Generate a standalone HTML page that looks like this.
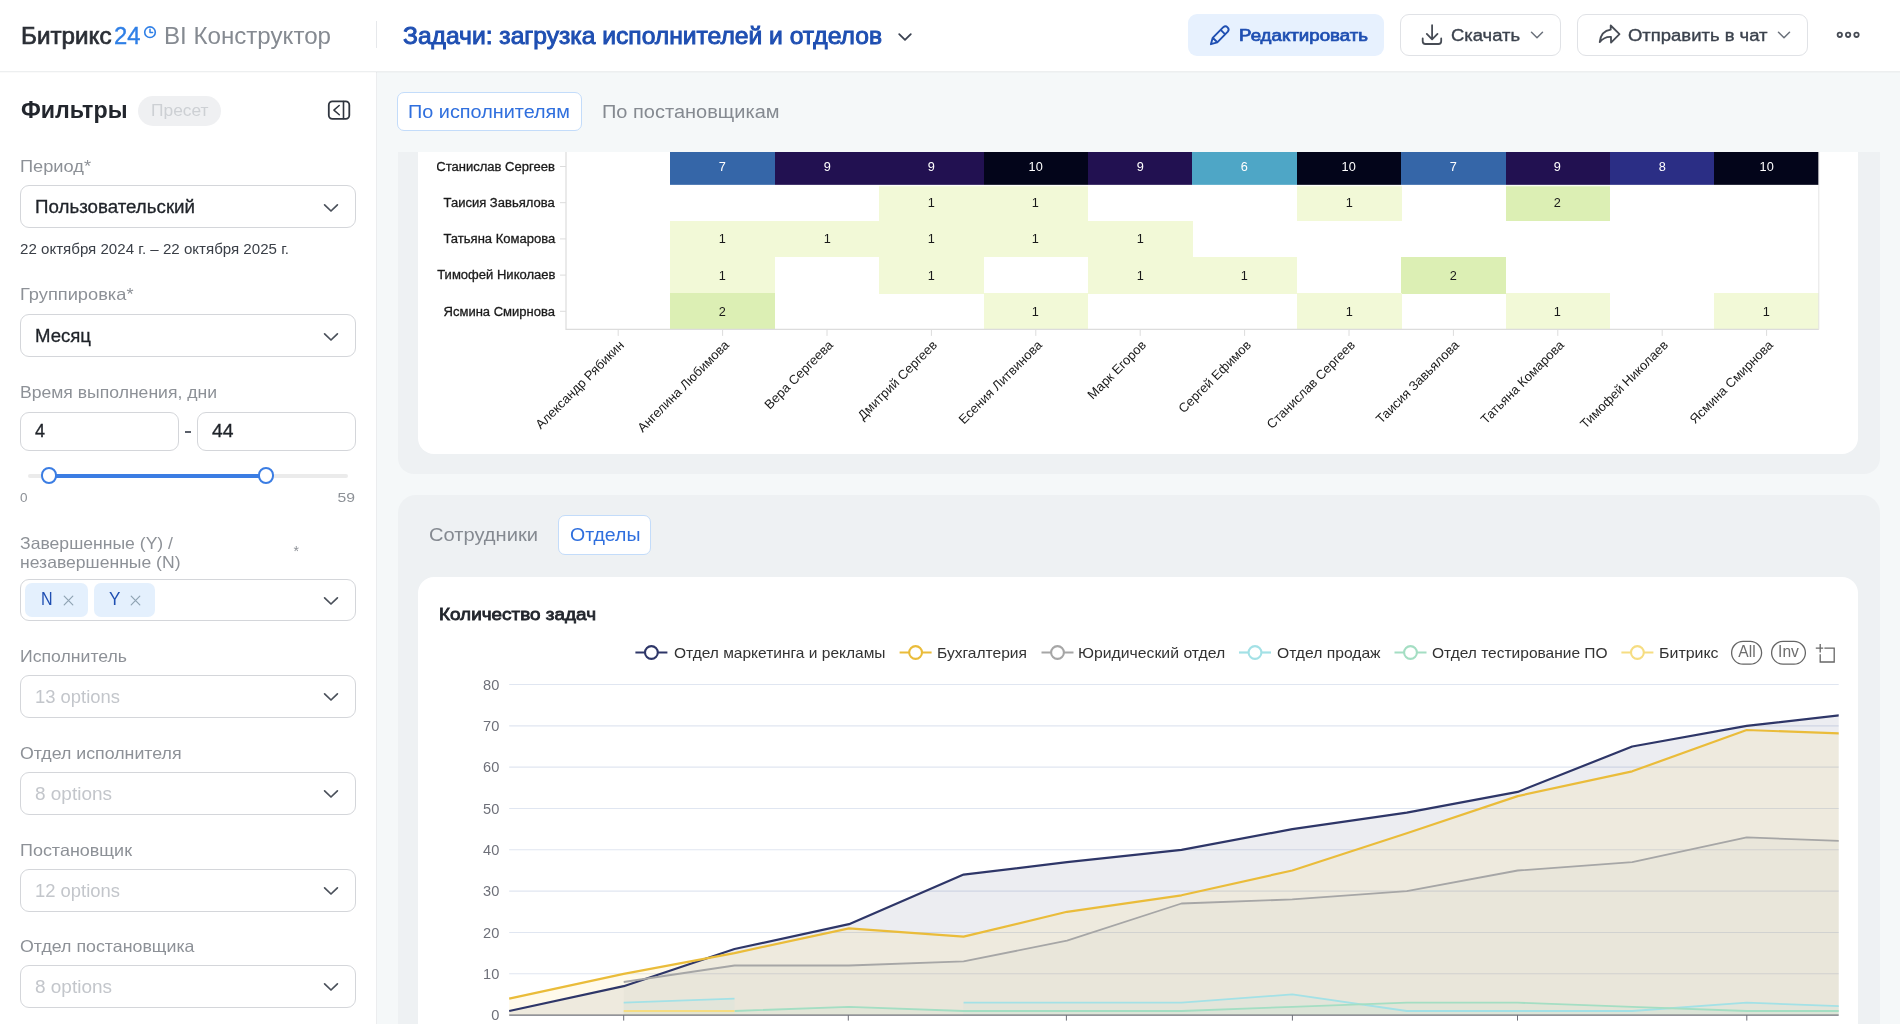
<!DOCTYPE html><html lang="ru"><head><meta charset="utf-8"><title>Битрикс24 BI Конструктор</title><style>
*{box-sizing:border-box}
html,body{margin:0;padding:0}
body{width:1900px;height:1024px;overflow:hidden;background:#f5f8f9;font-family:"Liberation Sans",Arial,sans-serif;position:relative}
.t{position:absolute;white-space:pre;line-height:1;display:block}
.b{position:absolute}
.sel{position:absolute;left:20px;width:336px;height:43px;border:1px solid #d4d6da;border-radius:9px;background:#fff}
svg{position:absolute;overflow:visible}
</style></head><body><div id="root" style="position:absolute;left:0;top:0;width:1900px;height:1024px;will-change:transform;overflow:hidden"><div class="b" style="left:398px;top:100px;width:1482px;height:374px;background:#eef1f3;border-radius:16px"></div><div class="b" style="left:418px;top:120px;width:1440px;height:334px;background:#fff;border-radius:16px"></div><div class="b" style="left:377px;top:72px;width:1523px;height:80px;background:#f5f8f9"></div><div class="b" style="left:398px;top:495px;width:1482px;height:600px;background:#eef1f3;border-radius:18px"></div><div class="b" style="left:418px;top:577px;width:1440px;height:500px;background:#fff;border-radius:16px"></div><div class="b" style="left:0;top:0;width:377px;height:1024px;background:#fff;border-right:1px solid #ecedef"></div><div class="b" style="left:0;top:0;width:1900px;height:72px;background:#fff;border-bottom:1px solid #edeff0;box-shadow:0 1px 1px rgba(0,0,0,.02)"></div><div class="b" style="left:375.5px;top:21px;width:1px;height:27px;background:#e6e8eb"></div><span class="t" style="left:20.50px;top:24.00px;font-size:24px;color:#2a2e35;transform:scaleX(1.0092);transform-origin:0 50%;-webkit-text-stroke:0.7px #2a2e35;">Битрикс</span><span class="t" style="left:114.00px;top:24.00px;font-size:24px;color:#2f7fe6;transform:scaleX(0.9924);transform-origin:0 50%;-webkit-text-stroke:0.4px #2f7fe6;">24</span><span class="t" style="left:163.50px;top:24.00px;font-size:24px;color:#858a91;transform:scaleX(1.0049);transform-origin:0 50%;">BI Конструктор</span><span class="t" style="left:402.50px;top:24.00px;font-size:24px;color:#1f4fb2;transform:scaleX(1.0262);transform-origin:0 50%;-webkit-text-stroke:0.95px #1f4fb2;">Задачи: загрузка исполнителей и отделов</span><svg style="left:897px;top:31px" width="16" height="12" viewBox="0 0 16 12"><path d="M2.2 3.2 8 8.8l5.8-5.6" fill="none" stroke="#3a4150" stroke-width="1.8" stroke-linecap="round" stroke-linejoin="round"/></svg><div class="b" style="left:1188px;top:14px;width:196px;height:42px;background:#e7f1fe;border-radius:9px"></div><span class="t" style="left:1238.50px;top:28.00px;font-size:16px;color:#1f4fb2;transform:scaleX(1.1671);transform-origin:0 50%;-webkit-text-stroke:0.7px #1f4fb2;">Редактировать</span><div class="b" style="left:1400px;top:14px;width:161px;height:42px;background:#fff;border:1px solid #e0e2e6;border-radius:9px"></div><span class="t" style="left:1451.00px;top:28.00px;font-size:16px;color:#3b424d;transform:scaleX(1.1500);transform-origin:0 50%;-webkit-text-stroke:0.35px #3b424d;">Скачать</span><svg style="left:1529px;top:29px" width="16" height="12" viewBox="0 0 16 12"><path d="M2.5 3.3 8 8.7l5.5-5.4" fill="none" stroke="#6a707a" stroke-width="1.5" stroke-linecap="round" stroke-linejoin="round"/></svg><div class="b" style="left:1577px;top:14px;width:231px;height:42px;background:#fff;border:1px solid #e0e2e6;border-radius:9px"></div><span class="t" style="left:1628.00px;top:28.00px;font-size:16px;color:#3b424d;transform:scaleX(1.1535);transform-origin:0 50%;-webkit-text-stroke:0.35px #3b424d;">Отправить в чат</span><svg style="left:1776px;top:29px" width="16" height="12" viewBox="0 0 16 12"><path d="M2.5 3.3 8 8.7l5.5-5.4" fill="none" stroke="#6a707a" stroke-width="1.5" stroke-linecap="round" stroke-linejoin="round"/></svg><span class="t" style="left:20.50px;top:99.00px;font-size:23px;color:#22262d;font-weight:700;transform:scaleX(1.0098);transform-origin:0 50%;">Фильтры</span><div class="b" style="left:137.5px;top:95.5px;width:83.5px;height:30px;background:#eff0f2;border-radius:15px"></div><span class="t" style="left:151.00px;top:103.00px;font-size:16px;color:#cdd0d4;transform:scaleX(1.0849);transform-origin:0 50%;">Пресет</span><svg style="left:0;top:0" width="1900" height="120" viewBox="0 0 1900 120" fill="none" stroke-linecap="round" stroke-linejoin="round"><circle cx="150" cy="32.2" r="5.3" stroke="#2f7fe6" stroke-width="1.6"/><path d="M150 29.2v3.2h2.6" stroke="#2f7fe6" stroke-width="1.5"/><path d="M1210.9 44.2L1212.7 37.8L1223.3 27.2a3.2 3.2 0 0 1 4.5 4.5L1217.3 42.3Z M1212.7 37.8L1217.3 42.3 M1220.7 29.8L1225.2 34.3" stroke="#1f4fb2" stroke-width="1.9"/><path d="M1432.1 25.2V39 M1426.8 33.9L1432.1 39.3L1437.5 33.9 M1422.7 38.5V41.3a2.7 2.7 0 0 0 2.7 2.7H1438.5a2.7 2.7 0 0 0 2.7-2.7V38.5" stroke="#474c55" stroke-width="1.8"/><path d="M1610.7 25.5L1619.5 34.1L1611 42.6V36.9C1606.4 36.6 1602.8 38.3 1599.7 42.1C1600.5 35.2 1604.3 30.5 1610.7 29.7Z" stroke="#474c55" stroke-width="1.8"/><g stroke="#474c55" stroke-width="1.8"><circle cx="1839.8" cy="34.8" r="2.2"/><circle cx="1848.1" cy="34.8" r="2.2"/><circle cx="1856.5" cy="34.8" r="2.2"/></g><rect x="328.8" y="101.3" width="20.5" height="17.5" rx="3.6" stroke="#2f353f" stroke-width="1.8"/><path d="M343.5 101.5V118.5" stroke="#2f353f" stroke-width="1.6"/><path d="M339.2 105.5L333.9 110.1L339.3 114.7" stroke="#2f353f" stroke-width="1.5"/></svg><span class="t" style="left:20.00px;top:158.00px;font-size:16.5px;color:#8d9197;transform:scaleX(1.1043);transform-origin:0 50%;">Период*</span><div class="sel" style="top:185px"></div><span class="t" style="left:35.00px;top:198.00px;font-size:18px;color:#1f2329;transform:scaleX(1.0403);transform-origin:0 50%;-webkit-text-stroke:0.3px #1f2329;">Пользовательский</span><svg style="left:322px;top:201.5px" width="18" height="12" viewBox="0 0 18 12"><path d="M2.6 2.8 9 9l6.4-6.2" fill="none" stroke="#4a505a" stroke-width="1.7" stroke-linecap="round" stroke-linejoin="round"/></svg><span class="t" style="left:20.00px;top:242.00px;font-size:14px;color:#3a3f47;transform:scaleX(1.0782);transform-origin:0 50%;">22 октября 2024 г. – 22 октября 2025 г.</span><span class="t" style="left:20.00px;top:286.00px;font-size:16.5px;color:#8d9197;transform:scaleX(1.1058);transform-origin:0 50%;">Группировка*</span><div class="sel" style="top:314px"></div><span class="t" style="left:35.00px;top:327.00px;font-size:18px;color:#1f2329;transform:scaleX(1.0320);transform-origin:0 50%;-webkit-text-stroke:0.3px #1f2329;">Месяц</span><svg style="left:322px;top:330.5px" width="18" height="12" viewBox="0 0 18 12"><path d="M2.6 2.8 9 9l6.4-6.2" fill="none" stroke="#4a505a" stroke-width="1.7" stroke-linecap="round" stroke-linejoin="round"/></svg><span class="t" style="left:20.00px;top:384.00px;font-size:16.5px;color:#8d9197;transform:scaleX(1.0654);transform-origin:0 50%;">Время выполнения, дни</span><div class="b" style="left:20px;top:412px;width:159px;height:39px;border:1px solid #d4d6da;border-radius:9px;background:#fff"></div><div class="b" style="left:197px;top:412px;width:159px;height:39px;border:1px solid #d4d6da;border-radius:9px;background:#fff"></div><span class="t" style="left:35.00px;top:422.00px;font-size:18px;color:#1f2329;-webkit-text-stroke:0.3px #1f2329;">4</span><span class="t" style="left:212.00px;top:422.00px;font-size:18px;color:#1f2329;transform:scaleX(1.0733);transform-origin:0 50%;-webkit-text-stroke:0.3px #1f2329;">44</span><div class="b" style="left:184.5px;top:430.5px;width:6px;height:2px;background:#5a606a"></div><div class="b" style="left:28px;top:473.7px;width:320px;height:4px;border-radius:2px;background:#ebebeb"></div><div class="b" style="left:49px;top:473.5px;width:217px;height:4.4px;background:#3b7de3"></div><div class="b" style="left:40.7px;top:467.4px;width:16.6px;height:16.6px;border-radius:50%;border:2.2px solid #3b7de3;background:#fff"></div><div class="b" style="left:257.7px;top:467.4px;width:16.6px;height:16.6px;border-radius:50%;border:2.2px solid #3b7de3;background:#fff"></div><span class="t" style="left:20.00px;top:491.00px;font-size:13.5px;color:#8d9197;">0</span><span class="t" style="left:339.97px;top:491.00px;font-size:13.5px;color:#8d9197;transform:scaleX(1.1642);transform-origin:100% 50%;">59</span><span class="t" style="left:20.00px;top:535.00px;font-size:16.5px;color:#8d9197;transform:scaleX(1.0662);transform-origin:0 50%;">Завершенные (Y) /</span><span class="t" style="left:20.00px;top:554.00px;font-size:16.5px;color:#8d9197;transform:scaleX(1.0646);transform-origin:0 50%;">незавершенные (N)</span><span class="t" style="left:293.50px;top:544.00px;font-size:14px;color:#8d9197;">*</span><div class="sel" style="top:579px;height:42px"></div><div class="b" style="left:24.5px;top:583px;width:63.5px;height:34px;border-radius:7px;background:#e4f0fd"></div><div class="b" style="left:93.5px;top:583px;width:61.5px;height:34px;border-radius:7px;background:#e4f0fd"></div><span class="t" style="left:40.80px;top:590.00px;font-size:18px;color:#1f4fb2;transform:scaleX(0.8923);transform-origin:0 50%;">N</span><span class="t" style="left:109.00px;top:590.00px;font-size:18px;color:#1f4fb2;transform:scaleX(0.9488);transform-origin:0 50%;">Y</span><svg style="left:62.5px;top:594.5px" width="11" height="11" viewBox="0 0 11 11"><path d="M1.2 1.2l8.6 8.6M9.8 1.2 1.2 9.8" stroke="#8fa3b3" stroke-width="1.2" stroke-linecap="round"/></svg><svg style="left:130px;top:594.5px" width="11" height="11" viewBox="0 0 11 11"><path d="M1.2 1.2l8.6 8.6M9.8 1.2 1.2 9.8" stroke="#8fa3b3" stroke-width="1.2" stroke-linecap="round"/></svg><svg style="left:322px;top:594.5px" width="18" height="12" viewBox="0 0 18 12"><path d="M2.6 2.8 9 9l6.4-6.2" fill="none" stroke="#4a505a" stroke-width="1.7" stroke-linecap="round" stroke-linejoin="round"/></svg><span class="t" style="left:20.00px;top:648.00px;font-size:16.5px;color:#8d9197;transform:scaleX(1.0695);transform-origin:0 50%;">Исполнитель</span><div class="sel" style="top:675px"></div><span class="t" style="left:35.00px;top:688.00px;font-size:18px;color:#c3c6cb;transform:scaleX(1.0231);transform-origin:0 50%;">13 options</span><svg style="left:322px;top:691px" width="18" height="12" viewBox="0 0 18 12"><path d="M2.6 2.8 9 9l6.4-6.2" fill="none" stroke="#4a505a" stroke-width="1.7" stroke-linecap="round" stroke-linejoin="round"/></svg><span class="t" style="left:20.00px;top:745.00px;font-size:16.5px;color:#8d9197;transform:scaleX(1.0763);transform-origin:0 50%;">Отдел исполнителя</span><div class="sel" style="top:772px"></div><span class="t" style="left:35.00px;top:785.00px;font-size:18px;color:#c3c6cb;transform:scaleX(1.0539);transform-origin:0 50%;">8 options</span><svg style="left:322px;top:788px" width="18" height="12" viewBox="0 0 18 12"><path d="M2.6 2.8 9 9l6.4-6.2" fill="none" stroke="#4a505a" stroke-width="1.7" stroke-linecap="round" stroke-linejoin="round"/></svg><span class="t" style="left:20.00px;top:842.00px;font-size:16.5px;color:#8d9197;transform:scaleX(1.0884);transform-origin:0 50%;">Постановщик</span><div class="sel" style="top:869px"></div><span class="t" style="left:35.00px;top:882.00px;font-size:18px;color:#c3c6cb;transform:scaleX(1.0231);transform-origin:0 50%;">12 options</span><svg style="left:322px;top:885px" width="18" height="12" viewBox="0 0 18 12"><path d="M2.6 2.8 9 9l6.4-6.2" fill="none" stroke="#4a505a" stroke-width="1.7" stroke-linecap="round" stroke-linejoin="round"/></svg><span class="t" style="left:20.00px;top:938.00px;font-size:16.5px;color:#8d9197;transform:scaleX(1.0783);transform-origin:0 50%;">Отдел постановщика</span><div class="sel" style="top:965px"></div><span class="t" style="left:35.00px;top:978.00px;font-size:18px;color:#c3c6cb;transform:scaleX(1.0539);transform-origin:0 50%;">8 options</span><svg style="left:322px;top:981px" width="18" height="12" viewBox="0 0 18 12"><path d="M2.6 2.8 9 9l6.4-6.2" fill="none" stroke="#4a505a" stroke-width="1.7" stroke-linecap="round" stroke-linejoin="round"/></svg><div class="b" style="left:397px;top:92px;width:185px;height:39px;background:#fff;border:1px solid #c3dcfa;border-radius:7px"></div><span class="t" style="left:408.30px;top:103.00px;font-size:18px;color:#2f6fde;transform:scaleX(1.1024);transform-origin:0 50%;">По исполнителям</span><span class="t" style="left:601.60px;top:103.00px;font-size:18px;color:#858a91;transform:scaleX(1.1108);transform-origin:0 50%;">По постановщикам</span><div class="b" style="left:437.3px;top:152px;width:1420px;height:281px;overflow:hidden"><svg style="left:-437.3px;top:-152px" width="1900" height="1024" viewBox="0 0 1900 1024"><rect x="670.40" y="148.40" width="104.70" height="36.50" fill="#3566a8" shape-rendering="crispEdges"/><rect x="774.80" y="148.40" width="104.70" height="36.50" fill="#221151" shape-rendering="crispEdges"/><rect x="879.20" y="148.40" width="104.70" height="36.50" fill="#221151" shape-rendering="crispEdges"/><rect x="983.60" y="148.40" width="104.70" height="36.50" fill="#03051a" shape-rendering="crispEdges"/><rect x="1088.00" y="148.40" width="104.70" height="36.50" fill="#221151" shape-rendering="crispEdges"/><rect x="1192.40" y="148.40" width="104.70" height="36.50" fill="#4ea6c6" shape-rendering="crispEdges"/><rect x="1296.80" y="148.40" width="104.70" height="36.50" fill="#03051a" shape-rendering="crispEdges"/><rect x="1401.20" y="148.40" width="104.70" height="36.50" fill="#3566a8" shape-rendering="crispEdges"/><rect x="1505.60" y="148.40" width="104.70" height="36.50" fill="#221151" shape-rendering="crispEdges"/><rect x="1610.00" y="148.40" width="104.70" height="36.50" fill="#2b2e85" shape-rendering="crispEdges"/><rect x="1714.40" y="148.40" width="104.70" height="36.50" fill="#03051a" shape-rendering="crispEdges"/><rect x="879.20" y="184.60" width="104.70" height="36.50" fill="#f2f9d7" shape-rendering="crispEdges"/><rect x="983.60" y="184.60" width="104.70" height="36.50" fill="#f2f9d7" shape-rendering="crispEdges"/><rect x="1296.80" y="184.60" width="104.70" height="36.50" fill="#f2f9d7" shape-rendering="crispEdges"/><rect x="1505.60" y="184.60" width="104.70" height="36.50" fill="#dcefb4" shape-rendering="crispEdges"/><rect x="670.40" y="220.80" width="104.70" height="36.50" fill="#f2f9d7" shape-rendering="crispEdges"/><rect x="774.80" y="220.80" width="104.70" height="36.50" fill="#f2f9d7" shape-rendering="crispEdges"/><rect x="879.20" y="220.80" width="104.70" height="36.50" fill="#f2f9d7" shape-rendering="crispEdges"/><rect x="983.60" y="220.80" width="104.70" height="36.50" fill="#f2f9d7" shape-rendering="crispEdges"/><rect x="1088.00" y="220.80" width="104.70" height="36.50" fill="#f2f9d7" shape-rendering="crispEdges"/><rect x="670.40" y="257.00" width="104.70" height="36.50" fill="#f2f9d7" shape-rendering="crispEdges"/><rect x="879.20" y="257.00" width="104.70" height="36.50" fill="#f2f9d7" shape-rendering="crispEdges"/><rect x="1088.00" y="257.00" width="104.70" height="36.50" fill="#f2f9d7" shape-rendering="crispEdges"/><rect x="1192.40" y="257.00" width="104.70" height="36.50" fill="#f2f9d7" shape-rendering="crispEdges"/><rect x="1401.20" y="257.00" width="104.70" height="36.50" fill="#dcefb4" shape-rendering="crispEdges"/><rect x="670.40" y="293.20" width="104.70" height="36.50" fill="#dcefb4" shape-rendering="crispEdges"/><rect x="983.60" y="293.20" width="104.70" height="36.50" fill="#f2f9d7" shape-rendering="crispEdges"/><rect x="1296.80" y="293.20" width="104.70" height="36.50" fill="#f2f9d7" shape-rendering="crispEdges"/><rect x="1505.60" y="293.20" width="104.70" height="36.50" fill="#f2f9d7" shape-rendering="crispEdges"/><rect x="1714.40" y="293.20" width="104.70" height="36.50" fill="#f2f9d7" shape-rendering="crispEdges"/><rect x="566.0" y="184.80" width="1252.8000000000002" height="1.5" fill="#fff" fill-opacity="0.8"/><path d="M566.0 140V329.4H1818.8" fill="none" stroke="#dcdcdc" stroke-width="1.2"/><path d="M1818.8 140V329.4" fill="none" stroke="#e4e4e4" stroke-width="1"/><path d="M560.0 166.5H566.0" stroke="#dcdcdc" stroke-width="1"/><path d="M560.0 202.7H566.0" stroke="#dcdcdc" stroke-width="1"/><path d="M560.0 238.9H566.0" stroke="#dcdcdc" stroke-width="1"/><path d="M560.0 275.1H566.0" stroke="#dcdcdc" stroke-width="1"/><path d="M560.0 311.3H566.0" stroke="#dcdcdc" stroke-width="1"/><path d="M618.2 329.4v6.5" stroke="#dcdcdc" stroke-width="1"/><path d="M722.6 329.4v6.5" stroke="#dcdcdc" stroke-width="1"/><path d="M827.0 329.4v6.5" stroke="#dcdcdc" stroke-width="1"/><path d="M931.4 329.4v6.5" stroke="#dcdcdc" stroke-width="1"/><path d="M1035.8 329.4v6.5" stroke="#dcdcdc" stroke-width="1"/><path d="M1140.2 329.4v6.5" stroke="#dcdcdc" stroke-width="1"/><path d="M1244.6 329.4v6.5" stroke="#dcdcdc" stroke-width="1"/><path d="M1349.0 329.4v6.5" stroke="#dcdcdc" stroke-width="1"/><path d="M1453.4 329.4v6.5" stroke="#dcdcdc" stroke-width="1"/><path d="M1557.8 329.4v6.5" stroke="#dcdcdc" stroke-width="1"/><path d="M1662.2 329.4v6.5" stroke="#dcdcdc" stroke-width="1"/><path d="M1766.6 329.4v6.5" stroke="#dcdcdc" stroke-width="1"/></svg></div><div class="b" style="left:437.3px;top:152px;width:1420px;height:281px;overflow:hidden"><div class="b" style="left:-437.3px;top:-152px;width:1900px;height:1024px"><span class="t" style="left:441.37px;top:161.00px;font-size:12.5px;color:#1a1a1a;transform:scaleX(1.0420);transform-origin:100% 50%;-webkit-text-stroke:0.3px #1a1a1a;">Станислав Сергеев</span><span class="t" style="left:719.26px;top:161.00px;font-size:12px;color:#fff;transform:scaleX(1.0600);transform-origin:50% 50%;">7</span><span class="t" style="left:823.66px;top:161.00px;font-size:12px;color:#fff;transform:scaleX(1.0600);transform-origin:50% 50%;">9</span><span class="t" style="left:928.06px;top:161.00px;font-size:12px;color:#fff;transform:scaleX(1.0600);transform-origin:50% 50%;">9</span><span class="t" style="left:1029.12px;top:161.00px;font-size:12px;color:#fff;transform:scaleX(1.0600);transform-origin:50% 50%;">10</span><span class="t" style="left:1136.86px;top:161.00px;font-size:12px;color:#fff;transform:scaleX(1.0600);transform-origin:50% 50%;">9</span><span class="t" style="left:1241.26px;top:161.00px;font-size:12px;color:#fff;transform:scaleX(1.0600);transform-origin:50% 50%;">6</span><span class="t" style="left:1342.32px;top:161.00px;font-size:12px;color:#fff;transform:scaleX(1.0600);transform-origin:50% 50%;">10</span><span class="t" style="left:1450.06px;top:161.00px;font-size:12px;color:#fff;transform:scaleX(1.0600);transform-origin:50% 50%;">7</span><span class="t" style="left:1554.46px;top:161.00px;font-size:12px;color:#fff;transform:scaleX(1.0600);transform-origin:50% 50%;">9</span><span class="t" style="left:1658.86px;top:161.00px;font-size:12px;color:#fff;transform:scaleX(1.0600);transform-origin:50% 50%;">8</span><span class="t" style="left:1759.92px;top:161.00px;font-size:12px;color:#fff;transform:scaleX(1.0600);transform-origin:50% 50%;">10</span><span class="t" style="left:448.45px;top:197.00px;font-size:12.5px;color:#1a1a1a;transform:scaleX(1.0420);transform-origin:100% 50%;-webkit-text-stroke:0.3px #1a1a1a;">Таисия Завьялова</span><span class="t" style="left:928.06px;top:197.00px;font-size:12px;color:#1a1a1a;transform:scaleX(1.0600);transform-origin:50% 50%;">1</span><span class="t" style="left:1032.46px;top:197.00px;font-size:12px;color:#1a1a1a;transform:scaleX(1.0600);transform-origin:50% 50%;">1</span><span class="t" style="left:1345.66px;top:197.00px;font-size:12px;color:#1a1a1a;transform:scaleX(1.0600);transform-origin:50% 50%;">1</span><span class="t" style="left:1554.46px;top:197.00px;font-size:12px;color:#1a1a1a;transform:scaleX(1.0600);transform-origin:50% 50%;">2</span><span class="t" style="left:447.97px;top:233.00px;font-size:12.5px;color:#1a1a1a;transform:scaleX(1.0420);transform-origin:100% 50%;-webkit-text-stroke:0.3px #1a1a1a;">Татьяна Комарова</span><span class="t" style="left:719.26px;top:233.00px;font-size:12px;color:#1a1a1a;transform:scaleX(1.0600);transform-origin:50% 50%;">1</span><span class="t" style="left:823.66px;top:233.00px;font-size:12px;color:#1a1a1a;transform:scaleX(1.0600);transform-origin:50% 50%;">1</span><span class="t" style="left:928.06px;top:233.00px;font-size:12px;color:#1a1a1a;transform:scaleX(1.0600);transform-origin:50% 50%;">1</span><span class="t" style="left:1032.46px;top:233.00px;font-size:12px;color:#1a1a1a;transform:scaleX(1.0600);transform-origin:50% 50%;">1</span><span class="t" style="left:1136.86px;top:233.00px;font-size:12px;color:#1a1a1a;transform:scaleX(1.0600);transform-origin:50% 50%;">1</span><span class="t" style="left:441.75px;top:269.00px;font-size:12.5px;color:#1a1a1a;transform:scaleX(1.0420);transform-origin:100% 50%;-webkit-text-stroke:0.3px #1a1a1a;">Тимофей Николаев</span><span class="t" style="left:719.26px;top:270.00px;font-size:12px;color:#1a1a1a;transform:scaleX(1.0600);transform-origin:50% 50%;">1</span><span class="t" style="left:928.06px;top:270.00px;font-size:12px;color:#1a1a1a;transform:scaleX(1.0600);transform-origin:50% 50%;">1</span><span class="t" style="left:1136.86px;top:270.00px;font-size:12px;color:#1a1a1a;transform:scaleX(1.0600);transform-origin:50% 50%;">1</span><span class="t" style="left:1241.26px;top:270.00px;font-size:12px;color:#1a1a1a;transform:scaleX(1.0600);transform-origin:50% 50%;">1</span><span class="t" style="left:1450.06px;top:270.00px;font-size:12px;color:#1a1a1a;transform:scaleX(1.0600);transform-origin:50% 50%;">2</span><span class="t" style="left:448.15px;top:306.00px;font-size:12.5px;color:#1a1a1a;transform:scaleX(1.0420);transform-origin:100% 50%;-webkit-text-stroke:0.3px #1a1a1a;">Ясмина Смирнова</span><span class="t" style="left:719.26px;top:306.00px;font-size:12px;color:#1a1a1a;transform:scaleX(1.0600);transform-origin:50% 50%;">2</span><span class="t" style="left:1032.46px;top:306.00px;font-size:12px;color:#1a1a1a;transform:scaleX(1.0600);transform-origin:50% 50%;">1</span><span class="t" style="left:1345.66px;top:306.00px;font-size:12px;color:#1a1a1a;transform:scaleX(1.0600);transform-origin:50% 50%;">1</span><span class="t" style="left:1554.46px;top:306.00px;font-size:12px;color:#1a1a1a;transform:scaleX(1.0600);transform-origin:50% 50%;">1</span><span class="t" style="left:1763.26px;top:306.00px;font-size:12px;color:#1a1a1a;transform:scaleX(1.0600);transform-origin:50% 50%;">1</span><div class="b" style="left:622.2px;top:343.1px;width:0;height:0;transform:rotate(-45deg)"><span class="t" style="left:-118.78px;top:-7.00px;font-size:13px;color:#1a1a1a;">Александр Рябикин</span></div><div class="b" style="left:726.6px;top:343.1px;width:0;height:0;transform:rotate(-45deg)"><span class="t" style="left:-123.12px;top:-7.00px;font-size:13px;color:#1a1a1a;">Ангелина Любимова</span></div><div class="b" style="left:831.0px;top:343.1px;width:0;height:0;transform:rotate(-45deg)"><span class="t" style="left:-90.73px;top:-7.00px;font-size:13px;color:#1a1a1a;">Вера Сергеева</span></div><div class="b" style="left:935.4px;top:343.1px;width:0;height:0;transform:rotate(-45deg)"><span class="t" style="left:-106.00px;top:-7.00px;font-size:13px;color:#1a1a1a;">Дмитрий Сергеев</span></div><div class="b" style="left:1039.8px;top:343.1px;width:0;height:0;transform:rotate(-45deg)"><span class="t" style="left:-111.67px;top:-7.00px;font-size:13px;color:#1a1a1a;">Есения Литвинова</span></div><div class="b" style="left:1144.2px;top:343.1px;width:0;height:0;transform:rotate(-45deg)"><span class="t" style="left:-76.47px;top:-7.00px;font-size:13px;color:#1a1a1a;">Марк Егоров</span></div><div class="b" style="left:1248.6px;top:343.1px;width:0;height:0;transform:rotate(-45deg)"><span class="t" style="left:-96.12px;top:-7.00px;font-size:13px;color:#1a1a1a;">Сергей Ефимов</span></div><div class="b" style="left:1353.0px;top:343.1px;width:0;height:0;transform:rotate(-45deg)"><span class="t" style="left:-118.38px;top:-7.00px;font-size:13px;color:#1a1a1a;">Станислав Сергеев</span></div><div class="b" style="left:1457.4px;top:343.1px;width:0;height:0;transform:rotate(-45deg)"><span class="t" style="left:-111.02px;top:-7.00px;font-size:13px;color:#1a1a1a;">Таисия Завьялова</span></div><div class="b" style="left:1561.8px;top:343.1px;width:0;height:0;transform:rotate(-45deg)"><span class="t" style="left:-111.52px;top:-7.00px;font-size:13px;color:#1a1a1a;">Татьяна Комарова</span></div><div class="b" style="left:1666.2px;top:343.1px;width:0;height:0;transform:rotate(-45deg)"><span class="t" style="left:-117.98px;top:-7.00px;font-size:13px;color:#1a1a1a;">Тимофей Николаев</span></div><div class="b" style="left:1770.6px;top:343.1px;width:0;height:0;transform:rotate(-45deg)"><span class="t" style="left:-111.33px;top:-7.00px;font-size:13px;color:#1a1a1a;">Ясмина Смирнова</span></div></div></div><span class="t" style="left:429.00px;top:526.00px;font-size:18px;color:#858a91;transform:scaleX(1.1179);transform-origin:0 50%;">Сотрудники</span><div class="b" style="left:558px;top:515px;width:93px;height:40px;background:#fff;border:1px solid #c3dcfa;border-radius:7px"></div><span class="t" style="left:569.50px;top:526.00px;font-size:18px;color:#2f6fde;transform:scaleX(1.0844);transform-origin:0 50%;">Отделы</span><span class="t" style="left:439.00px;top:606.00px;font-size:17px;color:#22262d;transform:scaleX(1.1125);transform-origin:0 50%;-webkit-text-stroke:0.8px #22262d;">Количество задач</span><svg style="left:0;top:0" width="1900" height="1024" viewBox="0 0 1900 1024"><defs><clipPath id="cp"><rect x="508" y="670" width="1330.7" height="360"/></clipPath></defs><path d="M509.2 973.77H1838.7" stroke="#e0e6f1" stroke-width="1.1"/><path d="M509.2 932.45H1838.7" stroke="#e0e6f1" stroke-width="1.1"/><path d="M509.2 891.12H1838.7" stroke="#e0e6f1" stroke-width="1.1"/><path d="M509.2 849.80H1838.7" stroke="#e0e6f1" stroke-width="1.1"/><path d="M509.2 808.48H1838.7" stroke="#e0e6f1" stroke-width="1.1"/><path d="M509.2 767.15H1838.7" stroke="#e0e6f1" stroke-width="1.1"/><path d="M509.2 725.83H1838.7" stroke="#e0e6f1" stroke-width="1.1"/><path d="M509.2 684.50H1838.7" stroke="#e0e6f1" stroke-width="1.1"/><g clip-path="url(#cp)"><path d="M509.2 1011.0 L623.7 986.2 L734.5 949.0 L849.0 924.2 L963.6 874.6 L1067.0 862.2 L1181.5 849.8 L1292.3 829.1 L1406.8 812.6 L1517.7 791.9 L1632.2 746.5 L1746.7 725.8 L1857.5 713.4 L1857.5 1015.1 L509.2 1015.1Z" fill="#2e3668" fill-opacity="0.09"/><path d="M509.2 998.6 L623.7 973.8 L734.5 953.1 L849.0 928.3 L963.6 936.6 L1067.0 911.8 L1181.5 895.3 L1292.3 870.5 L1406.8 833.3 L1517.7 796.1 L1632.2 771.3 L1746.7 730.0 L1857.5 734.1 L1857.5 1015.1 L509.2 1015.1Z" fill="#ffcd46" fill-opacity="0.11"/><path d="M623.7 982.0 L734.5 965.5 L849.0 965.5 L963.6 961.4 L1067.0 940.7 L1181.5 903.5 L1292.3 899.4 L1406.8 891.1 L1517.7 870.5 L1632.2 862.2 L1746.7 837.4 L1857.5 841.5 L1857.5 1015.1 L623.7 1015.1Z" fill="#969696" fill-opacity="0.05"/><path d="M623.7 1002.7 L734.5 998.6 L734.5 1015.1 L623.7 1015.1Z" fill="#9adfe2" fill-opacity="0.08"/><path d="M963.6 1002.7 L1067.0 1002.7 L1181.5 1002.7 L1292.3 994.4 L1406.8 1011.0 L1517.7 1011.0 L1632.2 1011.0 L1746.7 1002.7 L1857.5 1006.8 L1857.5 1015.1 L963.6 1015.1Z" fill="#9adfe2" fill-opacity="0.08"/><path d="M734.5 1011.0 L849.0 1006.8 L963.6 1011.0 L1067.0 1011.0 L1181.5 1011.0 L1292.3 1006.8 L1406.8 1002.7 L1517.7 1002.7 L1632.2 1006.8 L1746.7 1011.0 L1857.5 1011.0 L1857.5 1015.1 L734.5 1015.1Z" fill="#9bdcbb" fill-opacity="0.08"/><path d="M623.7 1011.0 L734.5 1011.0 L734.5 1015.1 L623.7 1015.1Z" fill="#f5da6b" fill-opacity="0.08"/><path d="M509.2 1011.0 L623.7 986.2 L734.5 949.0 L849.0 924.2 L963.6 874.6 L1067.0 862.2 L1181.5 849.8 L1292.3 829.1 L1406.8 812.6 L1517.7 791.9 L1632.2 746.5 L1746.7 725.8 L1857.5 713.4" fill="none" stroke="#2e3668" stroke-width="2.2" stroke-linejoin="round"/><path d="M509.2 998.6 L623.7 973.8 L734.5 953.1 L849.0 928.3 L963.6 936.6 L1067.0 911.8 L1181.5 895.3 L1292.3 870.5 L1406.8 833.3 L1517.7 796.1 L1632.2 771.3 L1746.7 730.0 L1857.5 734.1" fill="none" stroke="#eabc3a" stroke-width="2.2" stroke-linejoin="round"/><path d="M623.7 982.0 L734.5 965.5 L849.0 965.5 L963.6 961.4 L1067.0 940.7 L1181.5 903.5 L1292.3 899.4 L1406.8 891.1 L1517.7 870.5 L1632.2 862.2 L1746.7 837.4 L1857.5 841.5" fill="none" stroke="#a6a6a6" stroke-width="1.8" stroke-linejoin="round"/><path d="M623.7 1002.7 L734.5 998.6" fill="none" stroke="#a3e1e6" stroke-width="1.8" stroke-linejoin="round"/><path d="M963.6 1002.7 L1067.0 1002.7 L1181.5 1002.7 L1292.3 994.4 L1406.8 1011.0 L1517.7 1011.0 L1632.2 1011.0 L1746.7 1002.7 L1857.5 1006.8" fill="none" stroke="#a3e1e6" stroke-width="1.8" stroke-linejoin="round"/><path d="M734.5 1011.0 L849.0 1006.8 L963.6 1011.0 L1067.0 1011.0 L1181.5 1011.0 L1292.3 1006.8 L1406.8 1002.7 L1517.7 1002.7 L1632.2 1006.8 L1746.7 1011.0 L1857.5 1011.0" fill="none" stroke="#a4dec3" stroke-width="1.8" stroke-linejoin="round"/><path d="M623.7 1011.0 L734.5 1011.0" fill="none" stroke="#f6dd82" stroke-width="1.8" stroke-linejoin="round"/></g><path d="M509.2 1015.1H1838.7" stroke="#6e7079" stroke-width="1.1"/><path d="M623.7 1015.1v5.5" stroke="#6e7079" stroke-width="1"/><path d="M848.3 1015.1v5.5" stroke="#6e7079" stroke-width="1"/><path d="M1066.4 1015.1v5.5" stroke="#6e7079" stroke-width="1"/><path d="M1292.4 1015.1v5.5" stroke="#6e7079" stroke-width="1"/><path d="M1517.5 1015.1v5.5" stroke="#6e7079" stroke-width="1"/><path d="M1746.8 1015.1v5.5" stroke="#6e7079" stroke-width="1"/><path d="M635.4 652.5H667.4" stroke="#2e3668" stroke-width="2.2"/><circle cx="651.4" cy="652.5" r="6.4" fill="#fff" stroke="#2e3668" stroke-width="2.1"/><path d="M899.6 652.5H931.6" stroke="#eabc3a" stroke-width="2.2"/><circle cx="915.6" cy="652.5" r="6.4" fill="#fff" stroke="#eabc3a" stroke-width="2.1"/><path d="M1041.5 652.5H1073.5" stroke="#a6a6a6" stroke-width="2.2"/><circle cx="1057.5" cy="652.5" r="6.4" fill="#fff" stroke="#a6a6a6" stroke-width="2.1"/><path d="M1239 652.5H1271" stroke="#a3e1e6" stroke-width="2.2"/><circle cx="1255" cy="652.5" r="6.4" fill="#fff" stroke="#a3e1e6" stroke-width="2.1"/><path d="M1394.5 652.5H1426.5" stroke="#a4dec3" stroke-width="2.2"/><circle cx="1410.5" cy="652.5" r="6.4" fill="#fff" stroke="#a4dec3" stroke-width="2.1"/><path d="M1621.4 652.5H1653.4" stroke="#f6dd82" stroke-width="2.2"/><circle cx="1637.4" cy="652.5" r="6.4" fill="#fff" stroke="#f6dd82" stroke-width="2.1"/><rect x="1731.6" y="641.4" width="30" height="22.8" rx="11.4" fill="#fff" stroke="#666" stroke-width="1.3"/><rect x="1771.6" y="641.4" width="33.8" height="22.8" rx="11.4" fill="#fff" stroke="#666" stroke-width="1.3"/><path d="M1815.8 648.2H1823.2 M1820.2 644V652.6 M1820.2 654.2V662H1834.2V648.2H1824.4" fill="none" stroke="#666" stroke-width="1.3"/></svg><span class="t" style="left:673.80px;top:646.00px;font-size:14.2px;color:#333;transform:scaleX(1.0936);transform-origin:0 50%;">Отдел маркетинга и рекламы</span><span class="t" style="left:937.20px;top:646.00px;font-size:14.2px;color:#333;transform:scaleX(1.0982);transform-origin:0 50%;">Бухгалтерия</span><span class="t" style="left:1078.00px;top:646.00px;font-size:14.2px;color:#333;transform:scaleX(1.1125);transform-origin:0 50%;">Юридический отдел</span><span class="t" style="left:1277.20px;top:646.00px;font-size:14.2px;color:#333;transform:scaleX(1.1045);transform-origin:0 50%;">Отдел продаж</span><span class="t" style="left:1432.40px;top:646.00px;font-size:14.2px;color:#333;transform:scaleX(1.0933);transform-origin:0 50%;">Отдел тестирование ПО</span><span class="t" style="left:1659.20px;top:646.00px;font-size:14.2px;color:#333;transform:scaleX(1.1242);transform-origin:0 50%;">Битрикс</span><span class="t" style="left:1738.33px;top:644.00px;font-size:15.6px;color:#6e6e6e;">All</span><span class="t" style="left:1778.09px;top:644.00px;font-size:15.6px;color:#6e6e6e;">Inv</span><span class="t" style="left:491.18px;top:1008.00px;font-size:14.6px;color:#6e7079;">0</span><span class="t" style="left:483.07px;top:967.00px;font-size:14.6px;color:#6e7079;">10</span><span class="t" style="left:483.07px;top:926.00px;font-size:14.6px;color:#6e7079;">20</span><span class="t" style="left:483.07px;top:884.00px;font-size:14.6px;color:#6e7079;">30</span><span class="t" style="left:483.07px;top:843.00px;font-size:14.6px;color:#6e7079;">40</span><span class="t" style="left:483.07px;top:802.00px;font-size:14.6px;color:#6e7079;">50</span><span class="t" style="left:483.07px;top:760.00px;font-size:14.6px;color:#6e7079;">60</span><span class="t" style="left:483.07px;top:719.00px;font-size:14.6px;color:#6e7079;">70</span><span class="t" style="left:483.07px;top:678.00px;font-size:14.6px;color:#6e7079;">80</span></div></body></html>
